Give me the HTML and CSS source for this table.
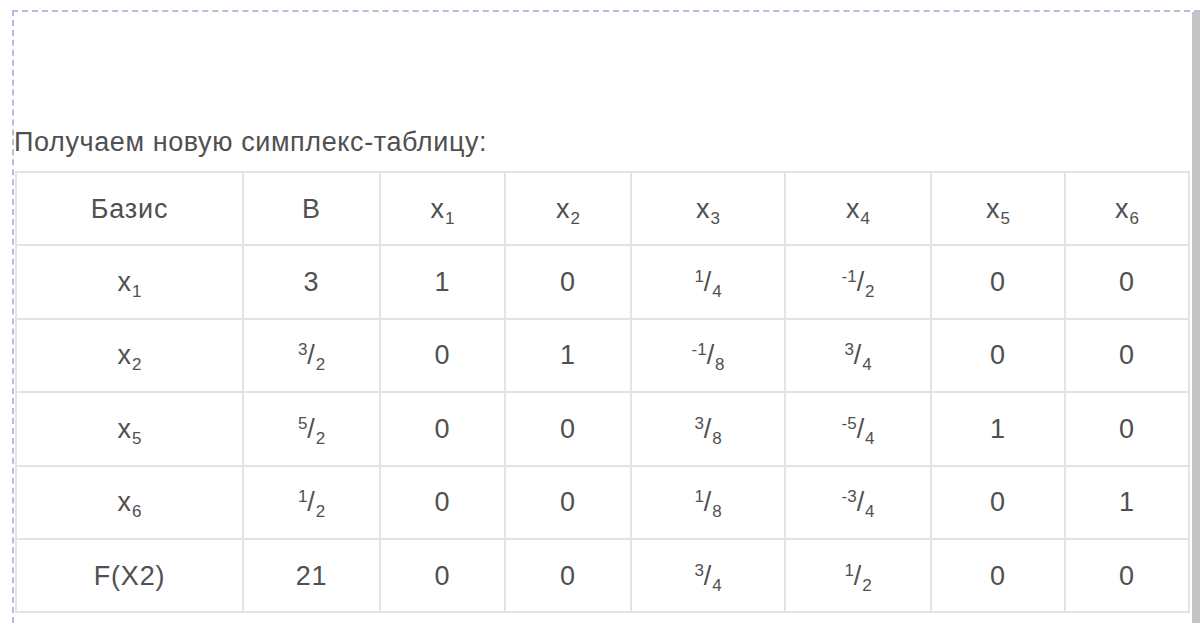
FILE: index.html
```html
<!DOCTYPE html>
<html lang="ru">
<head>
<meta charset="utf-8">
<link rel="stylesheet" href="styles.css">
</head>
<body>
<div class="frame">
  <div class="content">
    <p class="caption">Получаем новую симплекс-таблицу:</p>
    <table class="simplex">
      <colgroup>
        <col class="c0"><col class="c1"><col class="c2"><col class="c3"><col class="c4"><col class="c5"><col class="c6"><col class="c7">
      </colgroup>
      <tr><td>Базис</td><td>B</td><td>x<sub>1</sub></td><td>x<sub>2</sub></td><td>x<sub>3</sub></td><td>x<sub>4</sub></td><td>x<sub>5</sub></td><td>x<sub>6</sub></td></tr>
      <tr><td>x<sub>1</sub></td><td>3</td><td>1</td><td>0</td><td><sup>1</sup>/<sub>4</sub></td><td><sup>-1</sup>/<sub>2</sub></td><td>0</td><td>0</td></tr>
      <tr><td>x<sub>2</sub></td><td><sup>3</sup>/<sub>2</sub></td><td>0</td><td>1</td><td><sup>-1</sup>/<sub>8</sub></td><td><sup>3</sup>/<sub>4</sub></td><td>0</td><td>0</td></tr>
      <tr><td>x<sub>5</sub></td><td><sup>5</sup>/<sub>2</sub></td><td>0</td><td>0</td><td><sup>3</sup>/<sub>8</sub></td><td><sup>-5</sup>/<sub>4</sub></td><td>1</td><td>0</td></tr>
      <tr><td>x<sub>6</sub></td><td><sup>1</sup>/<sub>2</sub></td><td>0</td><td>0</td><td><sup>1</sup>/<sub>8</sub></td><td><sup>-3</sup>/<sub>4</sub></td><td>0</td><td>1</td></tr>
      <tr><td>F(X2)</td><td>21</td><td>0</td><td>0</td><td><sup>3</sup>/<sub>4</sub></td><td><sup>1</sup>/<sub>2</sub></td><td>0</td><td>0</td></tr>
    </table>
  </div>
  <div class="side"></div>
</div>
</body>
</html>
```

FILE: styles.css
```css
html, body {
  margin: 0;
  padding: 0;
  background: #fff;
}
body {
  font-family: "Liberation Sans", Arial, sans-serif;
  color: #555;
  height: 623px;
  overflow: hidden;
}
.frame {
  box-sizing: border-box;
  margin: 10px 0 0 12px;
  height: 613px;
  border-top: 2px dashed #b3c0dc;
  border-left: 2px dashed #b3c0dc;
  display: flex;
}
.content {
  flex: 1;
  padding-top: 114px;
}
.side {
  width: 10px;
  margin-left: 2px;
  background: #c4c4c4;
}
.caption {
  margin: 0 0 13px 0;
  font-size: 27px;
  line-height: 32px;
  letter-spacing: 0.6px;
  color: #505050;
}
.simplex {
  margin-left: 1px;
  border-collapse: collapse;
  table-layout: fixed;
  width: 1173px;
  font-size: 27px;
  letter-spacing: 0.8px;
  color: #505050;
}
.simplex td {
  border: 2px solid #e3e3e3;
  height: 71.4px;
  padding: 0;
  text-align: center;
  vertical-align: middle;
  line-height: 30px;
}
.simplex sub, .simplex sup {
  font-size: 17px;
  line-height: 0;
  letter-spacing: 0;
}
.simplex sub { vertical-align: -6px; }
.simplex sup { vertical-align: 9px; }
.c0 { width: 227px; }
.c1 { width: 137px; }
.c2 { width: 125px; }
.c3 { width: 126px; }
.c4 { width: 154px; }
.c5 { width: 146px; }
.c6 { width: 134px; }
.c7 { width: 124px; }
```
